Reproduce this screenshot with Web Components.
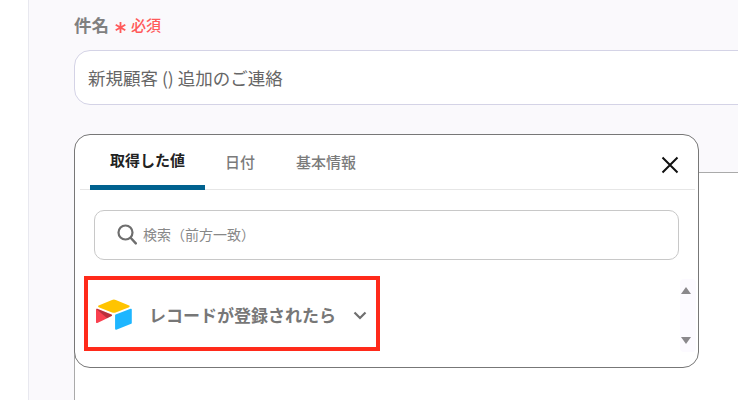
<!DOCTYPE html>
<html lang="ja">
<head>
<meta charset="utf-8">
<style>
  html, body { margin: 0; padding: 0; background: #fff; }
  body { font-family: "Noto Sans CJK JP", "Noto Sans", sans-serif; }
</style>
</head>
<body>
<subject-form>
  <field-label slot="fields" text="件名" required="必須"></field-label>
  <subject-input slot="fields">新規顧客 () 追加のご連絡</subject-input>
  <body-box slot="fields"></body-box>
  <value-picker slot="overlay">
    <picker-tabs></picker-tabs>
    <search-box placeholder="検索（前方一致）"></search-box>
    <record-row>レコードが登録されたら</record-row>
  </value-picker>
</subject-form>

<script>
const subjectFormTemplate = document.createElement('template');
subjectFormTemplate.innerHTML = `
  <style>
    :host {
      display: flex;
      width: 738px;
      height: 400px;
      overflow: hidden;
      background: #fff;
    }
    .gutter {
      flex: 0 0 28px;
      border-right: 1px solid #e8e8ef;
    }
    .panel {
      position: relative;
      flex: 1;
      min-width: 0;
      overflow: hidden;
      background: #faf9fc;
      padding: 10px 0 0 45px;
    }
    .fields {
      display: flex;
      flex-direction: column;
      width: 800px;
    }
  </style>
  <div class="gutter"></div>
  <div class="panel">
    <div class="fields"><slot name="fields"></slot></div>
    <slot name="overlay"></slot>
  </div>
`;

class SubjectForm extends HTMLElement {
  constructor() {
    super();
    this.attachShadow({ mode: 'open' }).append(subjectFormTemplate.content.cloneNode(true));
  }
}

class FieldLabel extends HTMLElement {
  constructor() {
    super();
    this.attachShadow({ mode: 'open' }).innerHTML = `
      <style>
        :host {
          display: flex;
          align-items: center;
          height: 28px;
          margin-bottom: 12px;
          color: #808080;
          font-size: 17.5px;
          font-weight: 700;
        }
        .star { width: 11px; height: 11px; margin: 6px 5px 0 6px; }
        .req { color: #ff5a5a; font-size: 15px; font-weight: 500; }
      </style>
      <span>${this.getAttribute('text')}</span>
      <svg class="star" viewBox="0 0 11 11"><path d="M5.5 0v11M.7 2.7l9.6 5.6M.7 8.3l9.6-5.6" stroke="#ff5a5a" stroke-width="1.8" fill="none"/></svg>
      <span class="req">${this.getAttribute('required')}</span>
    `;
  }
}

class SubjectInput extends HTMLElement {
  constructor() {
    super();
    this.attachShadow({ mode: 'open' }).innerHTML = `
      <style>
        :host {
          display: flex;
          align-items: center;
          box-sizing: border-box;
          height: 55px;
          padding: 0 13px;
          background: #fff;
          border: 1px solid #d4d3e6;
          border-radius: 16px;
          color: #666;
          font-size: 17.5px;
        }
      </style>
      <slot></slot>
    `;
  }
}

class BodyBox extends HTMLElement {
  constructor() {
    super();
    this.attachShadow({ mode: 'open' }).innerHTML = `
      <style>
        :host {
          display: block;
          height: 300px;
          margin-top: 67px;
          background: #fff;
          border: 1px solid #aaa;
        }
      </style>
    `;
  }
}

class ValuePicker extends HTMLElement {
  constructor() {
    super();
    this.attachShadow({ mode: 'open' }).innerHTML = `
      <style>
        :host {
          position: absolute;
          left: 45px;
          top: 134px;
          box-sizing: border-box;
          width: 625px;
          height: 234px;
          background: #fff;
          border: 1px solid #777;
          border-radius: 16px;
        }
      </style>
      <slot></slot>
    `;
  }
}

class PickerTabs extends HTMLElement {
  constructor() {
    super();
    this.attachShadow({ mode: 'open' }).innerHTML = `
      <style>
        :host {
          display: flex;
          align-items: stretch;
          box-sizing: border-box;
          height: 55px;
          margin: 0 3px 0 5px;
          padding-left: 10px;
          border-bottom: 1px solid #e6e6e6;
          font-size: 15px;
          font-weight: 500;
          color: #7b7b7b;
        }
        .tab {
          display: flex;
          align-items: center;
          justify-content: center;
          box-sizing: border-box;
          padding-bottom: 2px;
        }
        .active {
          width: 115px;
          color: #222;
          font-weight: 700;
          border-bottom: 5px solid #00628f;
          border-radius: 4px 4px 0 0;
          margin-bottom: -1px;
        }
        .date { margin-left: 20px; }
        .info { margin-left: 41px; }
        .close { width: 18px; height: 18px; margin: 21px 16px 0 auto; }
      </style>
      <div class="tab active">取得した値</div>
      <div class="tab date">日付</div>
      <div class="tab info">基本情報</div>
      <svg class="close" viewBox="0 0 18 18"><path d="M1.5 1.5l15 15M16.5 1.5l-15 15" stroke="#111" stroke-width="2" fill="none"/></svg>
    `;
  }
}

class SearchBox extends HTMLElement {
  constructor() {
    super();
    this.attachShadow({ mode: 'open' }).innerHTML = `
      <style>
        :host {
          display: flex;
          align-items: center;
          gap: 6px;
          box-sizing: border-box;
          height: 50px;
          margin: 20px 19px 0 19px;
          padding: 0 0 2px 22px;
          border: 1px solid #c8c8c8;
          border-radius: 10px;
          color: #888;
          font-size: 14px;
        }
        svg { width: 20px; height: 21px; flex: none; margin-top: 1px; }
      </style>
      <svg viewBox="0 0 20 21"><circle cx="8.5" cy="8.5" r="7" stroke="#6e6e6e" stroke-width="2.2" fill="none"/><path d="M13.6 13.8l5.2 5.6" stroke="#6e6e6e" stroke-width="2.4" stroke-linecap="round" fill="none"/></svg>
      <span>${this.getAttribute('placeholder')}</span>
    `;
  }
}

class RecordRow extends HTMLElement {
  constructor() {
    super();
    this.attachShadow({ mode: 'open' }).innerHTML = `
      <style>
        :host {
          display: block;
          position: relative;
          margin-top: 16px;
        }
        .marked {
          display: flex;
          align-items: center;
          box-sizing: border-box;
          width: 296px;
          height: 75px;
          margin-left: 9px;
          padding: 2px 0 0 8px;
          border: 4px solid #ff2a1a;
          color: #777;
          font-size: 17px;
          font-weight: 700;
        }
        .logo { width: 36px; height: 31px; flex: none; margin: 0 17px 0 0; }
        .chev { width: 14px; height: 9px; flex: none; margin: 2px 0 0 17px; }
        .scroll {
          position: absolute;
          right: 2px;
          top: 3px;
          display: flex;
          flex-direction: column;
          justify-content: space-between;
          align-items: center;
          box-sizing: border-box;
          width: 16px;
          height: 73px;
          padding: 8px 4px 8px 0;
          background: #fcfaff;
          border-radius: 4px;
        }
        .scroll svg { width: 10px; height: 7px; display: block; }
      </style>
      <div class="marked">
        <svg class="logo" viewBox="11 8 178 152" preserveAspectRatio="none">
          <path fill="#ffc400" d="M90.0389 12.3675L24.0799 39.6605c-3.668 1.518-3.63 6.728.061 8.191l66.235 26.266a24.58 24.58 0 0018.12 0l66.236-26.266c3.69-1.463 3.729-6.673.06-8.191l-65.959-27.293a24.58 24.58 0 00-18.794 0"/>
          <path fill="#1eb6ff" d="M105.3122 88.4608v65.6162c0 3.121 3.147 5.258 6.048 4.108l73.806-28.648a4.42 4.42 0 002.79-4.108V59.8137c0-3.121-3.147-5.258-6.048-4.108l-73.806 28.648a4.42 4.42 0 00-2.79 4.108"/>
          <path fill="#f9404f" d="M88.0781 91.8464l-21.904 10.576-2.224 1.075-46.238 22.155c-2.931 1.414-6.672-.722-6.672-3.978V60.0744c0-1.178.604-2.195 1.414-2.961a5.02 5.02 0 011.12-.84c1.104-.663 2.68-.84 4.02-.31l70.117 27.781c3.564 1.414 3.844 6.408.367 8.102"/>
          <path fill="#000" fill-opacity=".25" d="M88.0781 91.8464l-21.904 10.576-53.72-45.295a5.02 5.02 0 011.12-.84c1.104-.663 2.68-.84 4.02-.31l70.117 27.781c3.564 1.414 3.844 6.408.367 8.102"/>
        </svg>
        <span><slot></slot></span>
        <svg class="chev" viewBox="0 0 14 9"><path d="M1.5 1.5L7 7l5.5-5.5" stroke="#6f6f6f" stroke-width="2.2" fill="none"/></svg>
      </div>
      <div class="scroll">
        <svg viewBox="0 0 10 7"><path d="M5 0L10 7H0z" fill="#8a888c"/></svg>
        <svg viewBox="0 0 10 7"><path d="M0 0H10L5 7z" fill="#8a888c"/></svg>
      </div>
    `;
  }
}

customElements.define('subject-form', SubjectForm);
customElements.define('field-label', FieldLabel);
customElements.define('subject-input', SubjectInput);
customElements.define('body-box', BodyBox);
customElements.define('value-picker', ValuePicker);
customElements.define('picker-tabs', PickerTabs);
customElements.define('search-box', SearchBox);
customElements.define('record-row', RecordRow);
</script>
</body>
</html>
